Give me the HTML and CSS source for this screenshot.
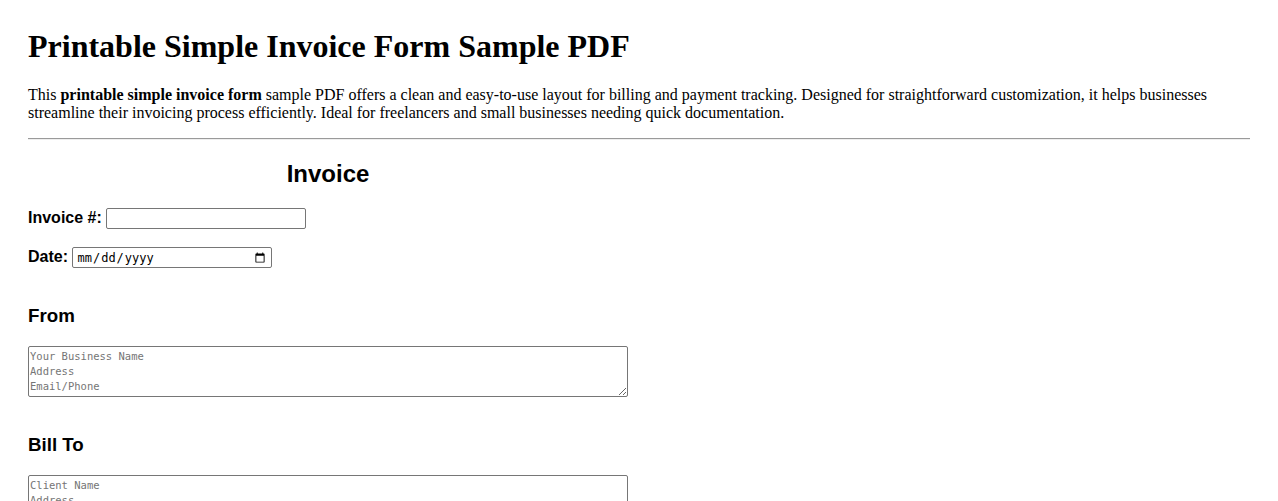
FILE: index.html
```html
<!DOCTYPE html>
<html lang="en">
<head>
<meta charset="utf-8">
<title>Printable Simple Invoice Form Sample PDF</title>
<link rel="stylesheet" href="styles.css">
</head>
<body>
<main class="page">
  <h1 class="title">Printable Simple Invoice Form Sample PDF</h1>
  <p class="intro">This <strong>printable simple invoice form</strong> sample PDF offers a clean and easy-to-use layout for billing and payment tracking. Designed for straightforward customization, it helps businesses streamline their invoicing process efficiently. Ideal for freelancers and small businesses needing quick documentation.</p>
  <hr class="rule">

  <form class="invoice">
    <h2 class="invoice-title">Invoice</h2>
    <div class="field">
      <label class="field-label" for="inv-no">Invoice #:</label>
      <input class="field-input" id="inv-no" type="text">
    </div>
    <div class="field">
      <label class="field-label" for="inv-date">Date:</label>
      <input class="field-input date-input" id="inv-date" type="date">
    </div>

    <section class="party">
      <h3 class="party-title">From</h3>
      <textarea class="party-box" rows="3" placeholder="Your Business Name&#10;Address&#10;Email/Phone"></textarea>
    </section>

    <section class="party">
      <h3 class="party-title">Bill To</h3>
      <textarea class="party-box" rows="3" placeholder="Client Name&#10;Address&#10;Email/Phone"></textarea>
    </section>
  </form>
</main>
</body>
</html>
```

FILE: styles.css
```css
html, body {
  margin: 0;
  padding: 0;
  background: #fff;
  color: #000;
}

.page {
  padding: 28px 28px 40px;
  font-family: "Liberation Serif", "Times New Roman", serif;
  font-size: 16px;
}

.title {
  margin: 0 0 21px;
  font-size: 32px;
  font-weight: bold;
  line-height: 37px;
}

.intro {
  margin: 0 0 16px;
  line-height: 18px;
}

.rule {
  margin: 0;
  border: 0;
  border-top: 1px solid #9a9a9a;
  border-bottom: 1px solid #eeeeee;
  height: 0;
}

.invoice {
  width: 600px;
  font-family: "Liberation Sans", Arial, sans-serif;
}

.invoice-title {
  margin: 20px 0 20px;
  text-align: center;
  font-size: 24px;
  line-height: 28px;
}

.field {
  margin: 0 0 18px;
  line-height: 18px;
}

.field-label {
  font-weight: bold;
  font-size: 16px;
}

.field-input {
  box-sizing: border-box;
  width: 200px;
  height: 21px;
  margin: 0;
  padding: 1px 2px;
  border: 1px solid #767676;
  border-radius: 2px;
  font-family: "Liberation Sans", Arial, sans-serif;
  font-size: 13px;
  vertical-align: baseline;
}

.date-input {
  font-family: "DejaVu Sans Mono", "Liberation Mono", monospace;
  font-size: 12px;
  padding: 1px 3px;
}

.party {
  margin-top: 37px;
}

.party-title {
  margin: 0 0 19px;
  font-size: 18.72px;
  line-height: 22px;
}

.party-box {
  display: block;
  box-sizing: border-box;
  width: 600px;
  height: 51px;
  margin: 0;
  padding: 2px 1px;
  border: 1px solid #767676;
  border-radius: 2px;
  font-family: "DejaVu Sans Mono", "Liberation Mono", monospace;
  font-size: 10.5px;
  line-height: 15px;
  resize: both;
}

.party-box::placeholder {
  color: #757575;
}
```
